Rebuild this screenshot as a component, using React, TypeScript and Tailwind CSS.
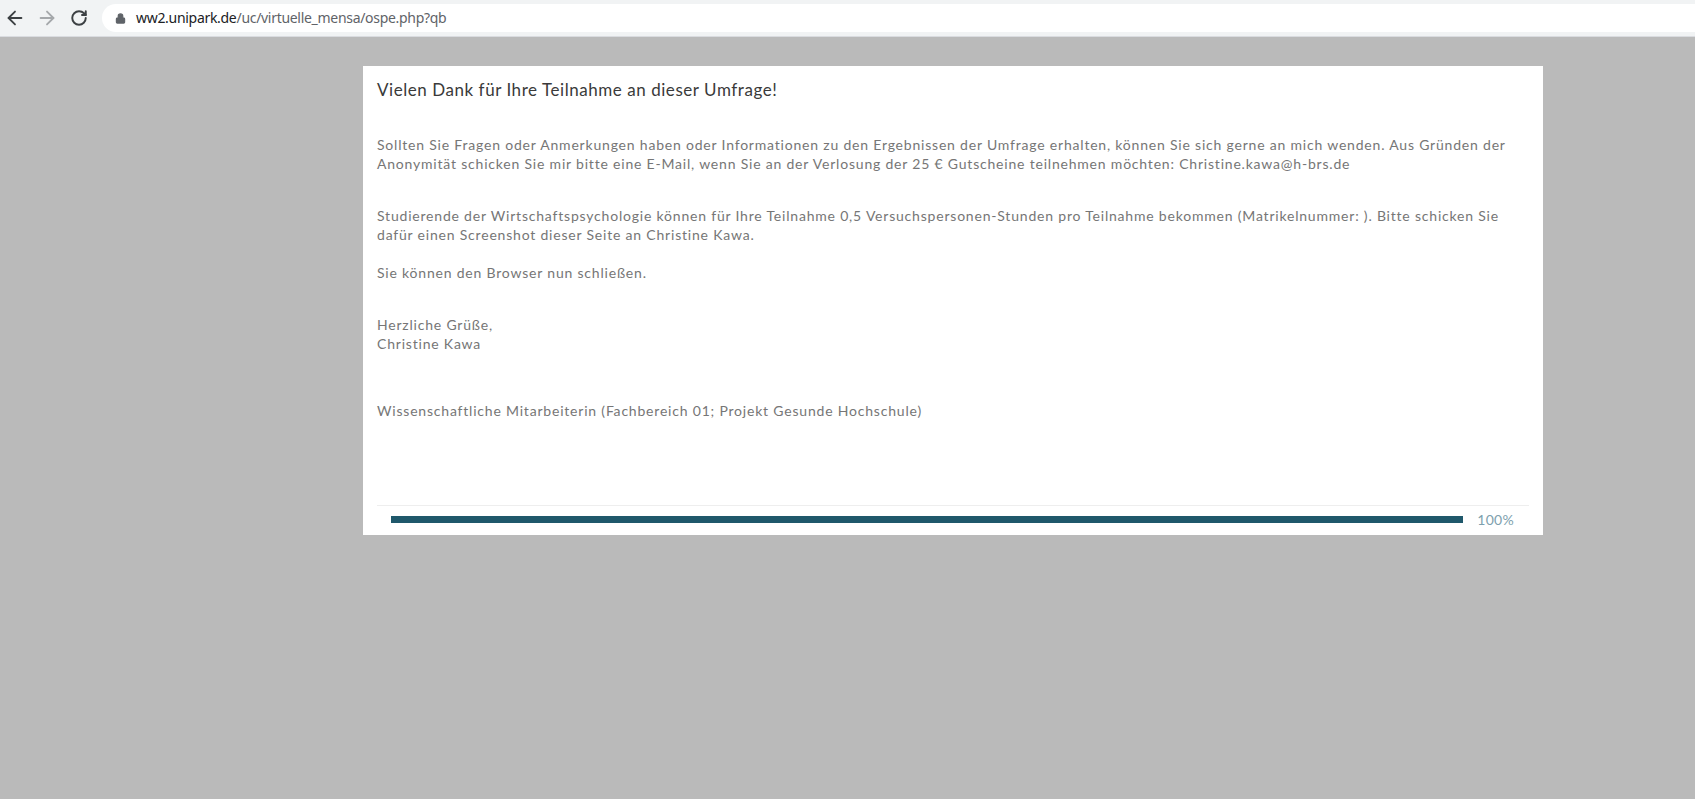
import React from "react";
import { ArrowLeft, ArrowRight, RotateCw, Lock } from "lucide-react";

const BODY_FONT = { fontFamily: "Lato, 'Open Sans', sans-serif" };

const BrowserBar = () => (
  <div className="h-[37px] bg-[#f1f3f4] flex items-center border-b border-[#dadce0]">
    <div className="flex items-center w-[102px] pl-[4px]">
      <ArrowLeft className="w-[22px] h-[22px] text-[#3c4043]" strokeWidth={2} />
      <ArrowRight className="ml-[10px] w-[22px] h-[22px] text-[#a5a8ab]" strokeWidth={2} />
      <RotateCw className="ml-[12px] w-[18px] h-[18px] text-[#3c4043]" strokeWidth={2.6} />
    </div>
    <div className="flex-1 h-[28px] bg-white rounded-l-full flex items-center pl-[13px]">
      <Lock className="w-[11px] h-[11px] text-[#5f6368] fill-[#5f6368]" strokeWidth={2.5} />
      <span
        className="ml-[10px] text-[14px] tracking-[-0.3px] leading-none text-[#202124]"
        style={{ fontFamily: "'Noto Sans', 'Open Sans', sans-serif" }}
      >
        ww2.unipark.de<span className="text-[#5f6368]">/uc/virtuelle_mensa/ospe.php?qb</span>
      </span>
    </div>
  </div>
);

const App = () => {
  return (
    <div className="min-h-screen bg-[#bababa] flex flex-col">
      <BrowserBar />
      <div className="pt-[29px] pl-[363px]">
        <div className="w-[1180px] h-[469px] bg-white px-[14px] pt-[12px] flex flex-col" style={BODY_FONT}>
          <h1 className="text-[17px] leading-[24px] tracking-[0.55px] text-[#3a3a3a]">Vielen Dank für Ihre Teilnahme an dieser Umfrage!</h1>

          <div className="text-[14px] leading-[19px] tracking-[0.8px] text-[#767676]">
            <p className="mt-[33px]">
              Sollten Sie Fragen oder Anmerkungen haben oder Informationen zu den Ergebnissen der Umfrage erhalten, können Sie sich gerne an mich wenden. Aus Gründen der
              <br />
              Anonymität schicken Sie mir bitte eine E-Mail, wenn Sie an der Verlosung der 25 € Gutscheine teilnehmen möchten: Christine.kawa@h-brs.de
            </p>
            <p className="mt-[33px]">
              Studierende der Wirtschaftspsychologie können für Ihre Teilnahme 0,5 Versuchspersonen-Stunden pro Teilnahme bekommen (Matrikelnummer: ). Bitte schicken Sie
              <br />
              dafür einen Screenshot dieser Seite an Christine Kawa.
            </p>
            <p className="mt-[19px]">Sie können den Browser nun schließen.</p>
            <p className="mt-[33px]">
              Herzliche Grüße,
              <br />
              Christine Kawa
            </p>
            <p className="mt-[48px]">Wissenschaftliche Mitarbeiterin (Fachbereich 01; Projekt Gesunde Hochschule)</p>
          </div>

          <div className="mt-auto border-t border-[#eeeeee] pt-[10px] pb-[12px]">
            <div className="flex items-center h-[7px]">
              <div className="ml-[14px] flex-1 h-[7px] bg-[#1f586b]" />
              <span className="ml-[14px] mr-[15px] text-[14px] tracking-[0.3px] leading-none text-[#7e9fae]">100%</span>
            </div>
          </div>
        </div>
      </div>
    </div>
  );
};

export default App;
